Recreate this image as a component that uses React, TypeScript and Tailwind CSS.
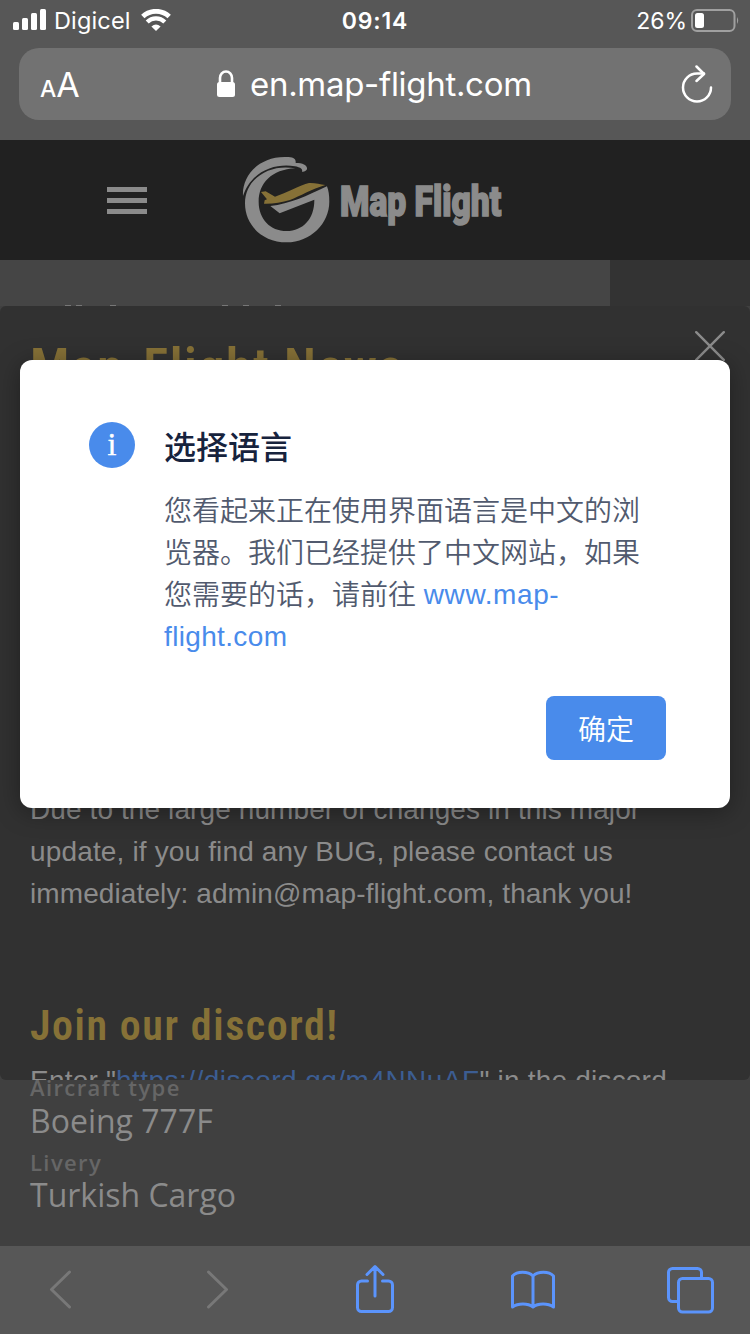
import React from 'react';

const SANS = "font-['Liberation_Sans','Noto_Sans_CJK_SC',sans-serif]";
const UI = "font-['Inter',sans-serif]";

const SignalIcon = () => (
  <svg width="34" height="22" viewBox="0 0 34 22" fill="#fff">
    <rect x="0" y="13" width="6" height="8" rx="1.5" />
    <rect x="9" y="9" width="6" height="12" rx="1.5" />
    <rect x="18" y="4" width="6" height="17" rx="1.5" />
    <rect x="27" y="0" width="6" height="21" rx="1.5" />
  </svg>
);

const WifiIcon = () => (
  <svg width="30" height="22" viewBox="0 0 30 22" fill="none" stroke="#fff">
    <path d="M1.8 7.6 A19 19 0 0 1 28.2 7.6" strokeWidth="4.8" />
    <path d="M6.2 13 A12.4 12.4 0 0 1 23.8 13" strokeWidth="4.2" />
    <path d="M15 22 L10.4 17.4 Q15 13.4 19.6 17.4 Z" fill="#fff" stroke="none" />
  </svg>
);

const BatteryIcon = () => (
  <svg width="49" height="23" viewBox="0 0 49 23">
    <rect x="1" y="1" width="42.5" height="21" rx="5" fill="none" stroke="#a0a0a0" strokeWidth="2" />
    <rect x="4" y="4" width="9" height="15" rx="2.5" fill="#fff" />
    <path d="M46 8 Q48.4 11.5 46 15 Z" fill="#a0a0a0" />
  </svg>
);

const LockIcon = () => (
  <svg width="20" height="28" viewBox="0 0 20 28">
    <path d="M4 13 V8 a6 6.5 0 0 1 12 0 V13" fill="none" stroke="#fff" strokeWidth="2.6" />
    <rect x="1" y="12" width="18" height="15" rx="2.5" fill="#fff" />
  </svg>
);

const ReloadIcon = () => (
  <svg width="34" height="38" viewBox="0 0 34 38" fill="none" stroke="#fff" strokeWidth="2.5" strokeLinecap="round" strokeLinejoin="round">
    <path d="M31 22.5 A14 14 0 1 1 17 8.5 H24" />
    <path d="M16.5 1.5 L24 9 L16.5 16" />
  </svg>
);

const Logo = () => (
  <svg width="93.3" height="90" viewBox="450 45 280 270">
    <path
      fill="#8b8b8b"
      d="M459 168 C455 110 505 48 590 51 C608 51 619 55 617 69 C640 69 653 76 651 88 C648 94 642 96 636 95 C639 86 630 82 615 79 C560 69 485 90 459 168 Z"
    />
    <path
      fill="#8b8b8b"
      d="M616 85 C540 70 465 115 465 190 C465 258 520 307 590 307 C662 307 718 250 718 185 C718 165 716 152 711 139 C650 168 600 192 541 198 L569 220 L673 179 C674 235 640 273 590 273 C540 273 506 236 506 185 C506 130 545 88 616 85 Z"
    />
    <path
      fill="#867137"
      d="M513 156 L527 154 L555 170 C590 159 630 135 657 129 C675 128 690 133 706 135 C665 148 630 168 600 180 C575 188 545 192 522 191 L524 181 L531 178 Z"
    />
  </svg>
);

const ChevronIcon = ({ flip = false }: { flip?: boolean }) => (
  <svg className={flip ? '-scale-x-100' : ''} width="24" height="40" viewBox="0 0 24 40" fill="none" stroke="#787878" strokeWidth="3" strokeLinecap="round" strokeLinejoin="round">
    <path d="M20.5 2 L2.5 19.5 L20.5 37" />
  </svg>
);

const ShareIcon = () => (
  <svg width="40" height="50" viewBox="0 0 40 50" fill="none" stroke="#5b94fc" strokeWidth="3" strokeLinecap="round" strokeLinejoin="round">
    <path d="M12.5 17 H6.5 a4 4 0 0 0 -4 4 V43.5 a4 4 0 0 0 4 4 H33.5 a4 4 0 0 0 4 -4 V21 a4 4 0 0 0 -4 -4 H27.5" />
    <path d="M20 32 V3 M12 10.5 L20 2.5 L28 10.5" />
  </svg>
);

const BookIcon = () => (
  <svg width="46" height="40" viewBox="0 0 46 40" fill="none" stroke="#5b94fc" strokeWidth="3" strokeLinejoin="round">
    <path d="M23 37 V6 C18 1 7 1 2.5 6 V37 C8 33 18 33 23 37 C28 33 38 33 43.5 37 V6 C39 1 28 1 23 6" />
  </svg>
);

const TabsIcon = () => (
  <svg width="48" height="48" viewBox="0 0 48 48" fill="none" stroke="#5b94fc" strokeWidth="3">
    <path d="M12 35.5 H6.5 a4 4 0 0 1 -4 -4 V6.5 a4 4 0 0 1 4 -4 H31.5 a4 4 0 0 1 4 4 V12" />
    <rect x="12.5" y="12.5" width="34" height="33.5" rx="4" />
  </svg>
);

const BrowserBar = () => (
  <header className={`h-[140px] bg-[#575757] text-white ${UI}`}>
    <div className="grid h-[40px] grid-cols-3 items-center">
      <div className="flex items-center pl-[13px]">
        <SignalIcon />
        <span className="mt-[2px] ml-[7px] text-[23.5px] tracking-[0.15px]">Digicel</span>
        <span className="ml-[10px]"><WifiIcon /></span>
      </div>
      <div className="mt-[2px] text-center text-[23px] font-semibold tracking-[0.8px]">09:14</div>
      <div className="flex items-center justify-end pr-[10px]">
        <span className="mt-[2px] mr-[4px] text-[23px]">26%</span>
        <BatteryIcon />
      </div>
    </div>
    <div className="mx-[19px] mt-[8px] flex h-[72px] items-center rounded-[20px] bg-[#727272]">
      <div className="mt-[2px] w-[197px] pl-[21px] leading-none">
        <span className="text-[23px] font-medium">A</span>
        <span className="text-[34px]">A</span>
      </div>
      <LockIcon />
      <span className="mt-px ml-[14px] text-[33px] tracking-[-0.3px]">en.map-flight.com</span>
      <span className="mr-[17px] ml-auto"><ReloadIcon /></span>
    </div>
  </header>
);

const SiteNav = () => (
  <nav className="flex h-[120px] items-center bg-[#212121]">
    <div className="ml-[107px] flex w-[40px] flex-col gap-[6px]">
      <span className="h-[5px] bg-[#8b8b8b]" />
      <span className="h-[5px] bg-[#8b8b8b]" />
      <span className="h-[5px] bg-[#8b8b8b]" />
    </div>
    <div className="ml-[93px]"><Logo /></div>
    <div className="mt-[3px] ml-[7px] origin-left scale-x-[0.8] whitespace-nowrap font-['Roboto',sans-serif] text-[42px] font-black text-[#8b8b8b] [-webkit-text-stroke:1.6px_#8b8b8b]">
      Map Flight
    </div>
  </nav>
);

const NewsPanel = () => (
  <section className={`relative h-[774px] overflow-hidden rounded-[6px] bg-[#313131] px-[30px] text-[28px] leading-[42px] text-[#8b8b8b] ${SANS}`}>
    <svg className="absolute top-[25px] right-[25px]" width="30" height="30" viewBox="0 0 30 30" stroke="#8b8b8b" strokeWidth="2.4" strokeLinecap="round">
      <path d="M1.2 1.2 L28.8 28.8 M28.8 1.2 L1.2 28.8" />
    </svg>
    <h2 className="mt-[32px] h-[60px] whitespace-nowrap font-['Roboto_Condensed','Roboto',sans-serif] text-[52px] leading-[60px] font-semibold tracking-[1.55px] text-[#867137]">
      Map-Flight News
    </h2>
    <p className="mt-[391px] whitespace-nowrap tracking-[0.1px]">
      Due to the large number of changes in this major
      <br />
      <span className="tracking-[0.15px]">update, if you find any BUG, please contact us</span>
      <br />
      immediately: admin@map-flight.com, thank you!
    </p>
    <h2 className="mt-[81px] h-[60px] whitespace-nowrap font-['Roboto_Condensed','Roboto',sans-serif] text-[42px] leading-[60px] font-semibold tracking-[1.55px] text-[#867137]">
      Join our discord!
    </h2>
    <p className="mt-[4px] whitespace-nowrap tracking-[0.2px]">
      Enter "<a className="tracking-[0.45px] text-[#3c5d92]">https://discord.gg/m4NNuAF</a>" in the discord
    </p>
  </section>
);

const FlightDetails = () => (
  <section className="h-[166px] overflow-hidden bg-[#404040] px-[30px] font-['Open_Sans',sans-serif]">
    <div className="-mt-[8px] h-[30px] text-[22px] leading-[30px] font-semibold tracking-[1.4px] text-[#666]">Aircraft type</div>
    <div className="mt-[-3px] h-[44px] text-[32px] leading-[44px] text-[#8b8b8b]">Boeing 777F</div>
    <div className="mt-[4px] h-[30px] text-[22px] leading-[30px] font-semibold tracking-[1.4px] text-[#666]">Livery</div>
    <div className="mt-[-4px] h-[44px] text-[32px] leading-[44px] text-[#8b8b8b]">Turkish Cargo</div>
  </section>
);

const LanguageDialog = () => (
  <div className={`absolute top-[360px] left-[20px] h-[448px] w-[710px] rounded-[12px] bg-white shadow-[0_4px_24px_rgba(0,0,0,0.35)] ${SANS}`}>
    <div className="flex pt-[62px] pl-[69px]">
      <div className="flex size-[46px] items-center justify-center rounded-full bg-[#498beb] pb-[2px] font-['Liberation_Serif',serif] text-[32px] leading-none text-white [-webkit-text-stroke:0.4px_#fff]">
        i
      </div>
      <div className="ml-[29px] whitespace-nowrap">
        <h3 className="mt-[2px] text-[32px] leading-[48px] font-medium text-[#17233d]">选择语言</h3>
        <p className="mt-[19px] text-[28px] leading-[42px] font-[350] text-[#515a6e]">
          您看起来正在使用界面语言是中文的浏
          <br />
          览器。我们已经提供了中文网站，如果
          <br />
          您需要的话，请前往 <a className="relative -top-px text-[#498beb]"><span className="tracking-[0.6px]">www.map-</span><br /><span className="tracking-[0.35px]">flight.com</span></a>
        </p>
      </div>
    </div>
    <div className="mt-[37px] flex justify-end pr-[64px]">
      <button className="h-[64px] w-[120px] rounded-[8px] bg-[#498beb] pt-[5px] text-[28px] font-[350] text-white">确定</button>
    </div>
  </div>
);

const Toolbar = () => (
  <footer className="flex h-[88px] items-center bg-[#575757]">
    <span className="ml-[49px]"><ChevronIcon /></span>
    <span className="ml-[132px]"><ChevronIcon flip /></span>
    <span className="mb-[2px] ml-[126px]"><ShareIcon /></span>
    <span className="ml-[115px]"><BookIcon /></span>
    <span className="ml-[110px]"><TabsIcon /></span>
  </footer>
);

const App: React.FC = () => (
  <div className="relative flex h-[1334px] w-[750px] flex-col overflow-hidden bg-[#404040]">
    <BrowserBar />
    <SiteNav />
    <main className="h-[986px]">
      <div className="h-[46px] bg-[#333]">
        <div className="flex h-[46px] w-[610px] items-end bg-[#454545]">
          {/* tops of the heading hidden behind the news panel */}
          <span className="ml-[65px] h-px w-[6px] bg-[#777]" />
          <span className="ml-[5px] h-px w-[6px] bg-[#777]" />
          <span className="ml-[28px] h-px w-[6px] bg-[#777]" />
          <span className="ml-[106px] h-px w-[6px] bg-[#777]" />
          <span className="ml-[15px] h-px w-[6px] bg-[#777]" />
          <span className="ml-[26px] h-px w-[6px] bg-[#777]" />
        </div>
      </div>
      <NewsPanel />
      <FlightDetails />
    </main>
    <Toolbar />
    <LanguageDialog />
  </div>
);

export default App;
